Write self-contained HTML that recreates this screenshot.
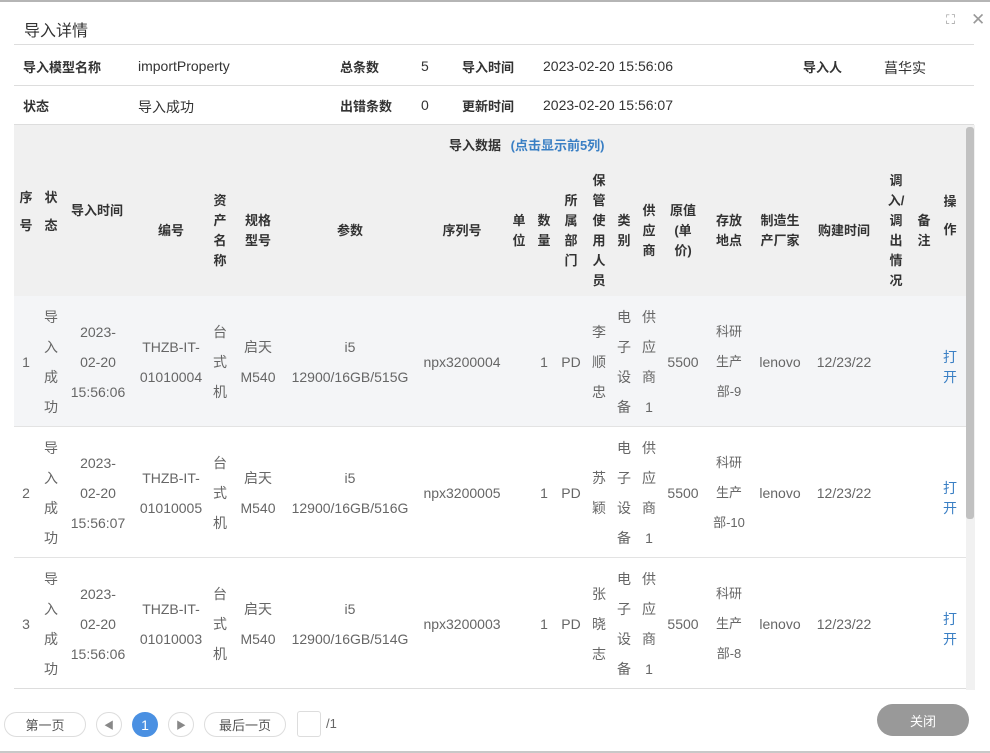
<!DOCTYPE html>
<html><head><meta charset="utf-8"><style>
*{margin:0;padding:0;box-sizing:border-box}
body{width:990px;height:753px;overflow:hidden;background:#fff;font-family:"Liberation Sans","Noto Sans CJK SC",sans-serif;position:relative;color:#333}
.a{position:absolute}
.c{position:absolute;display:flex;align-items:center;justify-content:center;text-align:center;white-space:nowrap}
.h{font-size:13px;font-weight:bold;color:#333;line-height:20px}
.b{font-size:14px;color:#666;line-height:30px}
.lbl{font-size:13px;font-weight:bold;color:#333}
.v{font-size:14px;color:#333}
.btn{position:absolute;top:712px;height:25px;border:1px solid #ddd;border-radius:13px;font-size:13px;color:#555;display:flex;align-items:center;justify-content:center}
</style></head><body>
<div class="a" style="left:0;top:0;width:990px;height:2px;background:#b5b5b5"></div>
<div class="a" style="left:0;top:751px;width:990px;height:2px;background:#c8c8c8"></div>
<div class="a" style="left:24px;top:17px;font-size:16px;color:#333">导入详情</div>
<div class="a" style="left:946px;top:12px;font-size:13px;color:#999">⛶</div>
<div class="a" style="left:971px;top:10px;font-size:17px;color:#999">✕</div>
<div class="a" style="left:14px;top:44px;width:960px;height:1px;background:#ddd"></div>
<div class="a" style="left:14px;top:85px;width:960px;height:1px;background:#ddd"></div>
<div class="a" style="left:14px;top:124px;width:960px;height:1px;background:#ddd"></div>
<div class="a lbl" style="left:23px;top:57px">导入模型名称</div>
<div class="a v" style="left:138px;top:58px">importProperty</div>
<div class="a lbl" style="left:340px;top:57px">总条数</div>
<div class="a v" style="left:421px;top:58px">5</div>
<div class="a lbl" style="left:462px;top:57px">导入时间</div>
<div class="a v" style="left:543px;top:58px">2023-02-20 15:56:06</div>
<div class="a lbl" style="left:803px;top:57px">导入人</div>
<div class="a v" style="left:884px;top:58px">菖华实</div>
<div class="a lbl" style="left:23px;top:96px">状态</div>
<div class="a v" style="left:138px;top:97px">导入成功</div>
<div class="a lbl" style="left:340px;top:96px">出错条数</div>
<div class="a v" style="left:421px;top:97px">0</div>
<div class="a lbl" style="left:462px;top:96px">更新时间</div>
<div class="a v" style="left:543px;top:97px">2023-02-20 15:56:07</div>

<div class="a" style="left:14px;top:125px;width:952px;height:171px;background:#f0f0f0"></div>
<div class="a" style="left:14px;top:296px;width:952px;height:131px;background:#f4f5f7"></div>
<div class="a" style="left:14px;top:426px;width:952px;height:1px;background:#e3e3e3"></div>
<div class="a" style="left:14px;top:557px;width:952px;height:1px;background:#e3e3e3"></div>
<div class="a" style="left:14px;top:688px;width:952px;height:1px;background:#ddd"></div>
<div class="a" style="left:966px;top:125px;width:9px;height:565px;background:#f1f1f1"></div>
<div class="a" style="left:966px;top:127px;width:8px;height:392px;background:#c1c1c1;border-radius:3px"></div>
<div class="a h" style="left:449px;top:136px">导入数据 <span style="color:#3a7fc4;margin-left:6px">(点击显示前5列)</span></div>

<div class="c h" style="left:14px;top:155px;width:24px;height:113px;line-height:28px">序<br>号</div>
<div class="c h" style="left:38px;top:155px;width:26px;height:113px;line-height:28px">状<br>态</div>
<div class="c h" style="left:64px;top:155px;width:66px;height:112px">导入时间</div>
<div class="c h" style="left:134px;top:155px;width:74px;height:151px">编号</div>
<div class="c h" style="left:208px;top:155px;width:24px;height:151px">资<br>产<br>名<br>称</div>
<div class="c h" style="left:234px;top:155px;width:48px;height:151px">规格<br>型号</div>
<div class="c h" style="left:284px;top:155px;width:132px;height:151px">参数</div>
<div class="c h" style="left:416px;top:155px;width:92px;height:151px">序列号</div>
<div class="c h" style="left:508px;top:155px;width:22px;height:151px">单<br>位</div>
<div class="c h" style="left:532px;top:155px;width:24px;height:151px">数<br>量</div>
<div class="c h" style="left:558px;top:155px;width:26px;height:151px">所<br>属<br>部<br>门</div>
<div class="c h" style="left:586px;top:155px;width:26px;height:151px">保<br>管<br>使<br>用<br>人<br>员</div>
<div class="c h" style="left:612px;top:155px;width:24px;height:151px">类<br>别</div>
<div class="c h" style="left:636px;top:155px;width:26px;height:151px">供<br>应<br>商</div>
<div class="c h" style="left:662px;top:155px;width:42px;height:151px">原值<br>(单<br>价)</div>
<div class="c h" style="left:706px;top:155px;width:46px;height:151px">存放<br>地点</div>
<div class="c h" style="left:754px;top:155px;width:52px;height:151px">制造生<br>产厂家</div>
<div class="c h" style="left:808px;top:155px;width:72px;height:151px">购建时间</div>
<div class="c h" style="left:882px;top:155px;width:28px;height:151px">调<br>入/<br>调<br>出<br>情<br>况</div>
<div class="c h" style="left:910px;top:155px;width:28px;height:151px">备<br>注</div>
<div class="c h" style="left:938px;top:155px;width:24px;height:121px;line-height:28px">操<br>作</div>

<div class="c b" style="left:14px;top:296px;width:24px;height:131px">1</div>
<div class="c b" style="left:38px;top:296px;width:26px;height:131px">导<br>入<br>成<br>功</div>
<div class="c b" style="left:64px;top:296px;width:68px;height:131px">2023-<br>02-20<br>15:56:06</div>
<div class="c b" style="left:134px;top:296px;width:74px;height:131px">THZB-IT-<br>01010004</div>
<div class="c b" style="left:208px;top:296px;width:24px;height:131px">台<br>式<br>机</div>
<div class="c b" style="left:234px;top:296px;width:48px;height:131px">启天<br>M540</div>
<div class="c b" style="left:284px;top:296px;width:132px;height:131px">i5<br>12900/16GB/515G</div>
<div class="c b" style="left:416px;top:296px;width:92px;height:131px">npx3200004</div>
<div class="c b" style="left:532px;top:296px;width:24px;height:131px">1</div>
<div class="c b" style="left:558px;top:296px;width:26px;height:131px">PD</div>
<div class="c b" style="left:586px;top:296px;width:26px;height:131px">李<br>顺<br>忠</div>
<div class="c b" style="left:612px;top:296px;width:24px;height:131px">电<br>子<br>设<br>备</div>
<div class="c b" style="left:636px;top:296px;width:26px;height:131px">供<br>应<br>商<br>1</div>
<div class="c b" style="left:662px;top:296px;width:42px;height:131px">5500</div>
<div class="c b" style="left:706px;top:296px;width:46px;height:131px;font-size:13px">科研<br>生产<br>部-9</div>
<div class="c b" style="left:754px;top:296px;width:52px;height:131px">lenovo</div>
<div class="c b" style="left:808px;top:296px;width:72px;height:131px">12/23/22</div>
<div class="c b" style="left:938px;top:296px;width:24px;height:141px;color:#3a7fc4;line-height:20px">打<br>开</div>

<div class="c b" style="left:14px;top:427px;width:24px;height:131px">2</div>
<div class="c b" style="left:38px;top:427px;width:26px;height:131px">导<br>入<br>成<br>功</div>
<div class="c b" style="left:64px;top:427px;width:68px;height:131px">2023-<br>02-20<br>15:56:07</div>
<div class="c b" style="left:134px;top:427px;width:74px;height:131px">THZB-IT-<br>01010005</div>
<div class="c b" style="left:208px;top:427px;width:24px;height:131px">台<br>式<br>机</div>
<div class="c b" style="left:234px;top:427px;width:48px;height:131px">启天<br>M540</div>
<div class="c b" style="left:284px;top:427px;width:132px;height:131px">i5<br>12900/16GB/516G</div>
<div class="c b" style="left:416px;top:427px;width:92px;height:131px">npx3200005</div>
<div class="c b" style="left:532px;top:427px;width:24px;height:131px">1</div>
<div class="c b" style="left:558px;top:427px;width:26px;height:131px">PD</div>
<div class="c b" style="left:586px;top:427px;width:26px;height:131px">苏<br>颖</div>
<div class="c b" style="left:612px;top:427px;width:24px;height:131px">电<br>子<br>设<br>备</div>
<div class="c b" style="left:636px;top:427px;width:26px;height:131px">供<br>应<br>商<br>1</div>
<div class="c b" style="left:662px;top:427px;width:42px;height:131px">5500</div>
<div class="c b" style="left:706px;top:427px;width:46px;height:131px;font-size:13px">科研<br>生产<br>部-10</div>
<div class="c b" style="left:754px;top:427px;width:52px;height:131px">lenovo</div>
<div class="c b" style="left:808px;top:427px;width:72px;height:131px">12/23/22</div>
<div class="c b" style="left:938px;top:427px;width:24px;height:141px;color:#3a7fc4;line-height:20px">打<br>开</div>

<div class="c b" style="left:14px;top:558px;width:24px;height:131px">3</div>
<div class="c b" style="left:38px;top:558px;width:26px;height:131px">导<br>入<br>成<br>功</div>
<div class="c b" style="left:64px;top:558px;width:68px;height:131px">2023-<br>02-20<br>15:56:06</div>
<div class="c b" style="left:134px;top:558px;width:74px;height:131px">THZB-IT-<br>01010003</div>
<div class="c b" style="left:208px;top:558px;width:24px;height:131px">台<br>式<br>机</div>
<div class="c b" style="left:234px;top:558px;width:48px;height:131px">启天<br>M540</div>
<div class="c b" style="left:284px;top:558px;width:132px;height:131px">i5<br>12900/16GB/514G</div>
<div class="c b" style="left:416px;top:558px;width:92px;height:131px">npx3200003</div>
<div class="c b" style="left:532px;top:558px;width:24px;height:131px">1</div>
<div class="c b" style="left:558px;top:558px;width:26px;height:131px">PD</div>
<div class="c b" style="left:586px;top:558px;width:26px;height:131px">张<br>晓<br>志</div>
<div class="c b" style="left:612px;top:558px;width:24px;height:131px">电<br>子<br>设<br>备</div>
<div class="c b" style="left:636px;top:558px;width:26px;height:131px">供<br>应<br>商<br>1</div>
<div class="c b" style="left:662px;top:558px;width:42px;height:131px">5500</div>
<div class="c b" style="left:706px;top:558px;width:46px;height:131px;font-size:13px">科研<br>生产<br>部-8</div>
<div class="c b" style="left:754px;top:558px;width:52px;height:131px">lenovo</div>
<div class="c b" style="left:808px;top:558px;width:72px;height:131px">12/23/22</div>
<div class="c b" style="left:938px;top:558px;width:24px;height:141px;color:#3a7fc4;line-height:20px">打<br>开</div>

<div class="btn" style="left:4px;width:82px">第一页</div>
<div class="btn" style="left:96px;width:26px;font-size:10px;color:#888">◀</div>
<div class="a" style="left:132px;top:712px;width:26px;height:25px;border-radius:13px;background:#4a90e2;color:#fff;font-size:14px;display:flex;align-items:center;justify-content:center">1</div>
<div class="btn" style="left:168px;width:26px;font-size:10px;color:#888">▶</div>
<div class="btn" style="left:204px;width:82px">最后一页</div>
<div class="a" style="left:297px;top:711px;width:24px;height:26px;border:1px solid #ddd;border-radius:3px"></div>
<div class="a" style="left:326px;top:716px;font-size:13px;color:#666">/1</div>
<div class="a" style="left:877px;top:704px;width:92px;height:32px;border-radius:16px;background:#999;color:#fff;font-size:13px;display:flex;align-items:center;justify-content:center">关闭</div>
</body></html>
